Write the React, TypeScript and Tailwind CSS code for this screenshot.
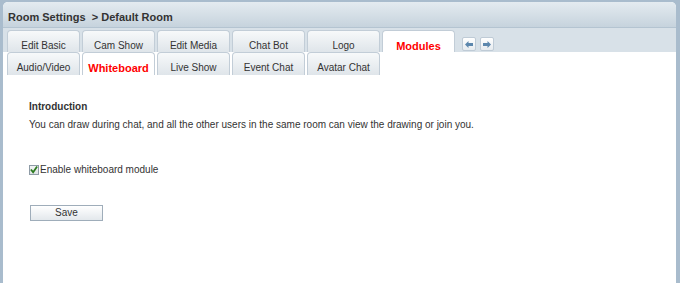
import React from 'react';

const row1 = ['Edit Basic', 'Cam Show', 'Edit Media', 'Chat Bot', 'Logo', 'Modules'];
const row2 = ['Audio/Video', 'Whiteboard', 'Live Show', 'Event Chat', 'Avatar Chat'];

function Tab({ label, active, h }: { label: string; active: boolean; h: string }) {
  return (
    <div
      className={`w-[73px] ${h} flex justify-center pt-[9px] leading-[12px] rounded-t-[4px] border border-b-0 border-[#c2cdd7] ${
        active ? 'bg-white text-[#ff0000] font-bold text-[11px]' : 'bg-gradient-to-b from-[#f7f9fa] to-[#dfe5ea] text-[#333]'
      }`}
    >
      {label}
    </div>
  );
}

function Arrow({ dir }: { dir: 'left' | 'right' }) {
  return (
    <div className="w-[14px] h-[14px] flex items-center justify-center rounded-[2px] border border-[#bfcbd6] bg-gradient-to-b from-white to-[#e6ebef]">
      <svg width="8" height="7" viewBox="0 0 8 7">
        {dir === 'left' ? (
          <path d="M0 3.5 L3.5 0 V2 H8 V5 H3.5 V7 Z" fill="#5c87ad" />
        ) : (
          <path d="M8 3.5 L4.5 0 V2 H0 V5 H4.5 V7 Z" fill="#5c87ad" />
        )}
      </svg>
    </div>
  );
}

export default function App() {
  return (
    <div
      className="w-[680px] h-[283px] bg-[#a9bccd] px-[3px] pt-[2px] overflow-hidden text-[10px] text-[#333]"
      style={{ fontFamily: '"Liberation Sans", Arial, sans-serif' }}
    >
      <div className="h-full w-[673px] bg-white flex flex-col rounded-t-[5px] overflow-hidden">
        {/* header */}
        <div className="h-[26px] shrink-0 bg-gradient-to-b from-[#e4ebf0] to-[#c6d3dd] flex items-center pt-[5px] pl-[5px] font-bold text-[11px] text-[#333] border-b border-[#b4c4d1]">
          Room Settings&nbsp;&nbsp;&gt; Default Room
        </div>
        {/* tab strip row 1 */}
        <div className="h-[24px] shrink-0 bg-[#d8e1e8] flex items-end pl-[4px] gap-[2px]">
          {row1.map((t) => (
            <Tab key={t} label={t} active={t === 'Modules'} h="h-[22px]" />
          ))}
          <div className="flex gap-[4px] self-start mt-[9px] ml-[5px]">
            <Arrow dir="left" />
            <Arrow dir="right" />
          </div>
        </div>
        {/* tab row 2 */}
        <div className="h-[23px] shrink-0 flex pl-[4px] gap-[2px]">
          {row2.map((t) => (
            <Tab key={t} label={t} active={t === 'Whiteboard'} h="h-[23px]" />
          ))}
        </div>
        {/* content */}
        <div className="pl-[26px] pt-[25px]">
          <div className="font-bold leading-[14px]">Introduction</div>
          <div className="mt-[4px] leading-[14px]">
            You can draw during chat, and all the other users in the same room can view the drawing or join you.
          </div>
          <label className="mt-[30px] flex items-center">
            <span className="w-[10px] h-[10px] mr-[1px] border border-[#8e9ba6] bg-gradient-to-b from-[#f2f4f5] to-[#dfe3e6] flex items-center justify-center">
              <svg width="9" height="9" viewBox="0 0 9 9" className="-mt-[1px]">
                <path d="M1 4.5 L3.5 7.5 L8 1" fill="none" stroke="#2c7a1f" strokeWidth="2" />
              </svg>
            </span>
            <span>Enable whiteboard module</span>
          </label>
          <button className="mt-[28px] ml-[1px] w-[73px] h-[16px] border border-[#9fadba] bg-gradient-to-b from-white to-[#e3e8ec] text-[#333] text-[10px] leading-[14px]">
            Save
          </button>
        </div>
      </div>
    </div>
  );
}
